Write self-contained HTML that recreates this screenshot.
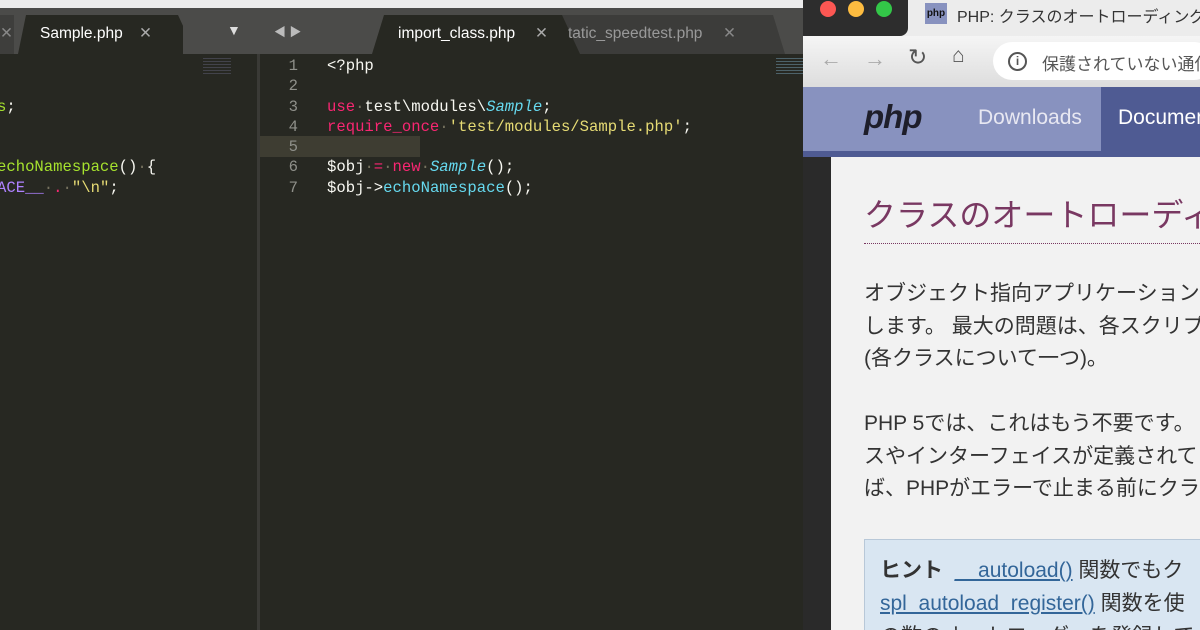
<!DOCTYPE html>
<html style="overflow:hidden;width:1200px;height:630px"><head><meta charset="utf-8"><style>
*{margin:0;padding:0;box-sizing:border-box}
body{width:1200px;height:630px;overflow:hidden;position:relative;background:#272822;font-family:"Liberation Sans","Noto Sans CJK JP",sans-serif}
.abs{position:absolute}
.mono{font-family:"Liberation Mono","DejaVu Sans Mono",monospace;font-size:15.6px;letter-spacing:0;color:#f8f8f2;white-space:pre;line-height:20.3px}
.k{color:#f92672}.s{color:#e6db74}.c{color:#66d9ef;font-style:italic}.f{color:#a6e22e}.p{color:#ae81ff}.n{color:#66d9ef}.d{color:#75715e}
.tab{position:absolute;top:15px;height:39px;color:#fff;font-size:15.5px;line-height:38px}
#br{position:absolute;left:803px;top:0;width:397px;height:630px;overflow:hidden;background:#f2f2f2}
#br .abs{white-space:nowrap}
</style></head><body>
<div class="abs" style="left:0;top:0;width:803px;height:8px;background:#ececec"></div>
<div class="abs" style="left:0;top:8px;width:803px;height:46px;background:#4b4b49"></div>
<div class="abs" style="left:0;top:15px;width:14px;height:39px;background:#3e3e3c"></div>
<div class="abs" style="left:18px;top:15px;width:165px;height:39px;background:#272822;clip-path:polygon(8px 0,160px 0,178px 100%,0 100%)"></div>
<div class="tab" style="left:40px">Sample.php</div>
<div class="tab" style="left:139px;color:#aaa">✕</div>
<div class="tab" style="left:0;color:#888">✕</div>
<div class="abs" style="left:227px;top:22px;color:#ddd;font-size:14px">▼</div>
<div class="abs" style="left:274px;top:23px;color:#bbb;font-size:12px">◀ ▶</div>
<div class="abs" style="left:545px;top:15px;width:240px;height:39px;background:#3c3c3a;clip-path:polygon(10px 0,228px 0,240px 100%,0 100%)"></div>
<div class="abs" style="left:372px;top:15px;width:208px;height:39px;background:#272822;clip-path:polygon(12px 0,190px 0,208px 100%,0 100%)"></div>
<div class="tab" style="left:398px">import_class.php</div>
<div class="tab" style="left:535px;color:#aaa">✕</div>
<div class="tab" style="left:568px;color:#999">tatic_speedtest.php</div>
<div class="tab" style="left:723px;color:#888">✕</div>
<div class="abs" style="left:257px;top:54px;width:3px;height:576px;background:#3a3a36"></div>
<div class="abs" style="left:260px;top:136px;width:160px;height:21px;background:#3e3d32"></div>
<div class="abs mono" style="left:-3px;top:56px">

<span class="f">s</span>;


<span class="f">echoNamespace</span>()<span class="d">·</span>{
<span class="p">ACE__</span><span class="d">·</span><span class="k">.</span><span class="d">·</span><span class="s">"\n"</span>;</div>
<div class="abs mono" style="left:282px;top:56px;color:#8f908a;text-align:right;width:16px">1
2
3
4
5
6
7</div>
<div class="abs mono" style="left:327px;top:56px">&lt;?php

<span class="k">use</span><span class="d">·</span>test\modules\<span class="c">Sample</span>;
<span class="k">require_once</span><span class="d">·</span><span class="s">'test/modules/Sample.php'</span>;

$obj<span class="d">·</span><span class="k">=</span><span class="d">·</span><span class="k">new</span><span class="d">·</span><span class="c">Sample</span>();
$obj-&gt;<span class="n">echoNamespace</span>();</div>
<div class="abs" style="left:203px;top:58px;width:28px;height:16px;background:repeating-linear-gradient(#556 0 1px,transparent 1px 3px);opacity:.6"></div>
<div class="abs" style="left:776px;top:58px;width:27px;height:16px;background:repeating-linear-gradient(#689 0 1px,transparent 1px 3px);opacity:.6"></div>
<div id="br">
<div class="abs" style="left:0;top:0;width:397px;height:36px;background:#ececec"></div>
<div class="abs" style="left:0;top:0;width:105px;height:36px;background:#2d2d2d;border-bottom-right-radius:8px"></div>
<div class="abs" style="left:17px;top:1px;width:16px;height:16px;border-radius:50%;background:#fc5753"></div>
<div class="abs" style="left:45px;top:1px;width:16px;height:16px;border-radius:50%;background:#fdbc40"></div>
<div class="abs" style="left:73px;top:1px;width:16px;height:16px;border-radius:50%;background:#33c748"></div>
<div class="abs" style="left:122px;top:3px;width:22px;height:21px;background:#8892bf;font-size:10px;font-weight:bold;color:#111;text-align:center;line-height:21px">php</div>
<div class="abs" style="left:154px;top:3px;font-size:16px;color:#333">PHP: クラスのオートローディング</div>
<div class="abs" style="left:0;top:36px;width:397px;height:51px;background:linear-gradient(#f5f5f5,#ddd)"></div>
<div class="abs" style="left:17px;top:46px;font-size:22px;color:#aaa">←</div>
<div class="abs" style="left:61px;top:46px;font-size:22px;color:#aaa">→</div>
<div class="abs" style="left:105px;top:44px;font-size:23px;color:#555">↻</div>
<div class="abs" style="left:149px;top:44px;font-size:21px;color:#555">⌂</div>
<div class="abs" style="left:190px;top:42px;width:220px;height:38px;border-radius:19px;background:#fff"></div>
<div class="abs" style="left:205px;top:52px;width:19px;height:19px;border:2px solid #555;border-radius:50%;font-size:12px;text-align:center;line-height:15px;color:#555;font-weight:bold">i</div>
<div class="abs" style="left:239px;top:50px;font-size:17px;color:#555">保護されていない通信</div>
<div class="abs" style="left:0;top:87px;width:298px;height:66px;background:#8892bf"></div>
<div class="abs" style="left:298px;top:87px;width:99px;height:66px;background:#4f5b93"></div>
<div class="abs" style="left:0;top:151px;width:397px;height:6px;background:#4f5b93"></div>
<div class="abs" style="left:61px;top:98px;font-size:33px;font-weight:bold;font-style:italic;color:#1e1e2a;letter-spacing:-1px">php</div>
<div class="abs" style="left:175px;top:106px;font-size:21px;color:#e8e8f2">Downloads</div>
<div class="abs" style="left:315px;top:106px;font-size:21px;color:#fff">Documentation</div>
<div class="abs" style="left:0;top:157px;width:28px;height:473px;background:#2a2a2a"></div>
<div class="abs" style="left:61px;top:190px;font-size:32px;color:#793862">クラスのオートローディング</div>
<div class="abs" style="left:61px;top:243px;width:336px;border-top:1px dotted #793862"></div>
<div class="abs" style="left:61px;top:278px;font-size:21px;color:#333;line-height:32.5px">オブジェクト指向アプリケーションを<br>します。 最大の問題は、各スクリプト<br>(各クラスについて一つ)。<br><br>PHP 5では、これはもう不要です。<br>スやインターフェイスが定義されて<br>ば、PHPがエラーで止まる前にクラス</div>
<div class="abs" style="left:61px;top:539px;width:340px;height:100px;background:#d9e6f2;border:1px solid #b8c8d8"></div>
<div class="abs" style="left:77px;top:554px;font-size:21px;color:#333;line-height:33px"><b>ヒント</b>&nbsp; <span style="color:#336699;text-decoration:underline">__autoload()</span> 関数でもク<br><span style="color:#336699;text-decoration:underline">spl_autoload_register()</span> 関数を使<br>の数のオートローダーを登録して</div>
</div>
</body></html>
